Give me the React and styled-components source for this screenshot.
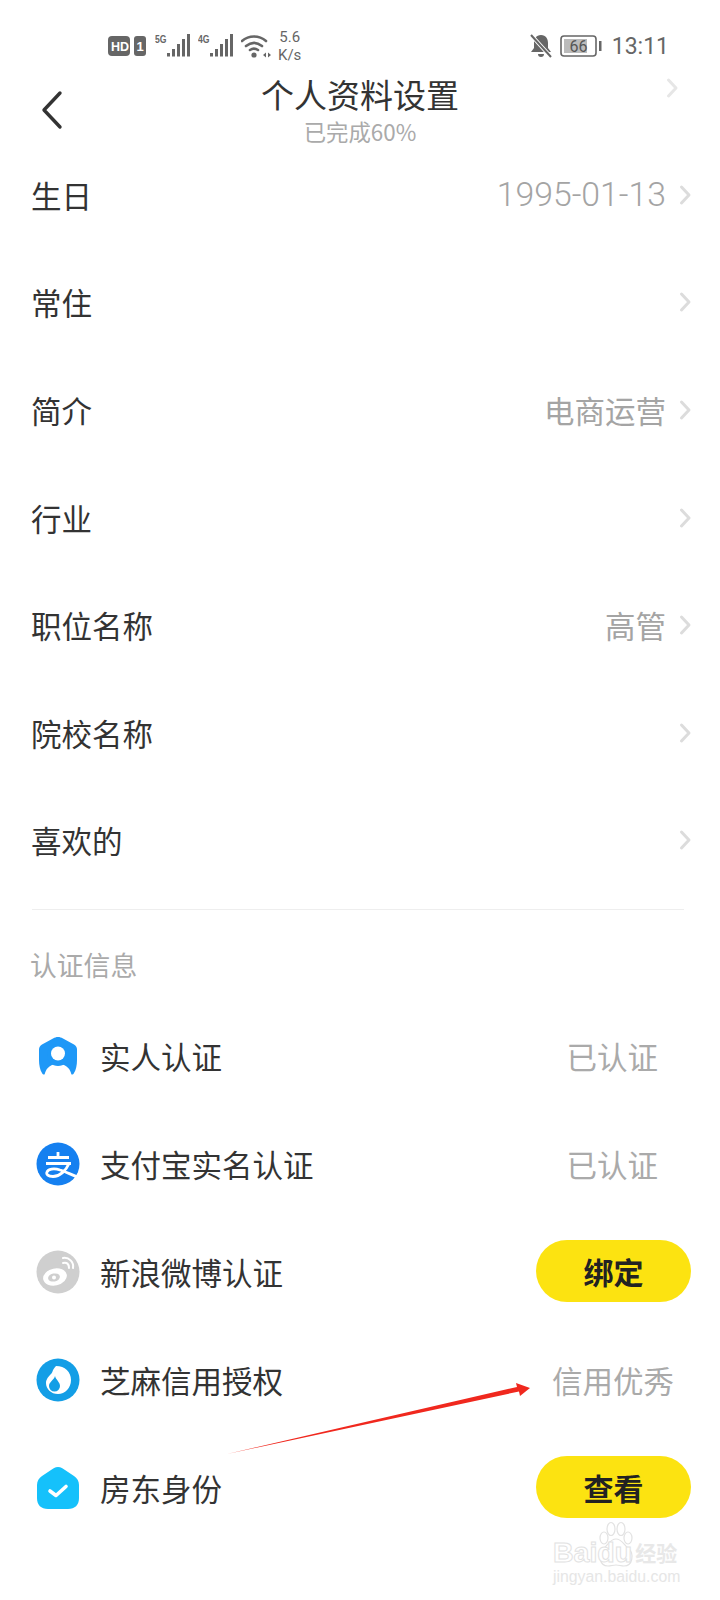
import React from 'react'
import styled, { createGlobalStyle } from 'styled-components'

const GlobalStyle = createGlobalStyle`
    html, body {
        margin: 0;
        background: #fff;
    }
    body {
        font-family: "Noto Sans CJK SC", "Noto Sans", sans-serif;
        color: #333;
    }
`
const Page = styled.div`
    position: relative;
    width: 720px;
    height: 1600px;
    overflow: hidden;
    background: #fff;
`
const StatusBar = styled.div`
    display: flex;
    align-items: center;
    justify-content: space-between;
    height: 48px;
    padding: 22px 51px 0 108px;
    color: #666;
`
const StatusGroup = styled.div`
    display: flex;
    align-items: center;
    gap: 7px;
`
const Speed = styled.div`
    font-family: Roboto, sans-serif;
    font-size: 15px;
    line-height: 18px;
    text-align: center;
    color: #666;
`
const Clock = styled.div`
    font-family: Roboto, sans-serif;
    font-size: 23px;
    color: #666;
    margin-left: 3px;
`
const Header = styled.div`
    position: relative;
    display: flex;
    flex-direction: column;
    align-items: center;
    height: 74px;
    margin: 1px 0 -4px;
`
const BackButton = styled.div`
    position: absolute;
    left: 40px;
    top: 19px;
`
const GhostChevron = styled.div`
    position: absolute;
    right: 41px;
    top: 5px;
`
const Title = styled.div`
    font-size: 33px;
    line-height: 46px;
    color: #333;
`
const Subtitle = styled.div`
    font-size: 22.4px;
    line-height: 28px;
    color: #aaa;
`
const List = styled.div`
    display: flex;
    flex-direction: column;
    padding: 0 32px 0 31px;
`
const Row = styled.div`
    display: flex;
    align-items: center;
    justify-content: space-between;
    height: 107.6px;
`
const Label = styled.div`
    font-size: 30.5px;
    color: #333;
`
const RowRight = styled.div`
    display: flex;
    align-items: center;
    gap: 12px;
    margin-right: -4px;
`
const Value = styled.div`
    font-size: ${p => p.$num ? 33.8 : 30.5}px;
    font-family: ${p => p.$num ? 'Roboto, sans-serif' : 'inherit'};
    font-weight: ${p => p.$num ? 300 : 400};
    color: #a4a4a4;
`
const Divider = styled.div`
    height: 1px;
    margin: 15px 36px 0 32px;
    background: #eee;
`
const SectionTitle = styled.div`
    padding: 37px 30px 0;
    font-size: 26.8px;
    line-height: 36px;
    color: #aaa;
`
const AuthList = styled.div`
    display: flex;
    flex-direction: column;
    padding: 19px 0 0 36px;
`
const AuthRow = styled.div`
    display: flex;
    align-items: center;
    height: 108px;
`
const AuthIcon = styled.div`
    display: flex;
    align-items: center;
    justify-content: center;
    width: 44px;
    height: 44px;
    margin-right: 20px;
`
const AuthLabel = styled.div`
    flex: 1;
    font-size: 30.5px;
    color: #333;
`
const AuthStatus = styled.div`
    font-size: 30.5px;
    color: #aaa;
    margin-right: ${p => p.$right}px;
`
const BindButton = styled.div`
    display: flex;
    align-items: center;
    justify-content: center;
    width: 155px;
    height: 62px;
    margin: -3px 29px 0 0;
    border-radius: 31px;
    background: #fce311;
    font-size: 30px;
    font-weight: 700;
    color: #222;
`
const ArrowLayer = styled.svg`
    position: absolute;
    left: 0;
    top: 0;
    pointer-events: none;
`
const Watermark = styled.div`
    position: absolute;
    left: 553px;
    top: 1536px;
    width: 132px;
`
const MarkLine = styled.div`
    position: relative;
    display: flex;
    align-items: center;
    font-family: "Liberation Sans", sans-serif;
    font-size: 28.5px;
    font-weight: 700;
    line-height: 32px;
    color: #fff;
    -webkit-text-stroke: 1px #e2e2e2;
`
const MarkCn = styled.span`
    font-family: "Noto Sans CJK SC", sans-serif;
    font-size: 21px;
    margin-left: 3px;
    color: #e8e8e8;
    -webkit-text-stroke: 0;
`
const MarkUrl = styled.div`
    font-family: "Liberation Sans", sans-serif;
    font-size: 15.8px;
    line-height: 18px;
    color: #e6e6e6;
    white-space: nowrap;
`
const Paw = styled.svg`
    position: absolute;
    left: 43px;
    top: -15px;
`

const Chevron = ({ color = '#dcdcdc' }) => (
    <svg width="14" height="24" viewBox="0 0 14 24" fill="none">
        <path d="M3.500 4l7.500 8-7.500 8" stroke={color} strokeWidth="3" strokeLinecap="round" strokeLinejoin="round" />
    </svg>
)

const Signal = ({ tag }) => (
    <svg width="36" height="26" viewBox="0 0 36 26">
        <text x="0" y="9.500" transform="scale(.75 1)" fontFamily="Liberation Sans" fontWeight="700" fontSize="11.5" fill="#666">{tag}</text>
        <rect x="12" y="20" width="3" height="3.500" fill="#666" />
        <rect x="17" y="16" width="3" height="7.500" fill="#666" />
        <rect x="22" y="11" width="3" height="12.500" fill="#666" />
        <rect x="27" y="6" width="3" height="17.500" fill="#666" />
        <rect x="32" y="1" width="3" height="22.500" fill="#666" />
    </svg>
)

const fields = [
    ['生日', '1995-01-13', true],
    ['常住'],
    ['简介', '电商运营'],
    ['行业'],
    ['职位名称', '高管'],
    ['院校名称'],
    ['喜欢的'],
]

const icons = {
    person: (
        <svg width="44" height="44" viewBox="0 0 44 44">
            <path d="M22 3c2 0 3 .5 5 1.500l11 6c2 1 3 3 3 5V26c0 5-1 10-3 13-1 2-3 2-4 0-2-4-4-7-12-7s-10 3-12 7c-1 2-3 2-4 0-2-3-3-8-3-13V15.500c0-2 1-4 3-5l11-6c2-1 3-1.500 5-1.500z" fill="#1e98f7" />
            <path d="M8.500 41c1-5 4-11 13.500-11S34.500 36 35.500 41z" fill="#fff" />
            <circle cx="22" cy="21" r="11" fill="#1e98f7" />
            <circle cx="22" cy="19.500" r="7" fill="#fff" />
        </svg>
    ),
    alipay: (
        <svg width="44" height="44" viewBox="0 0 44 44">
            <circle cx="22" cy="22" r="21.500" fill="#1580f0" />
            <path d="M22 10v7M12 15.500h21M10 21.500h25M33 21.500c-3 7-9 13-16 13-5 0-7-2-6-4.500 1-3 7-4 13-2 5 1.500 12 5 20 8" stroke="#fff" strokeWidth="2.800" fill="none" />
        </svg>
    ),
    weibo: (
        <svg width="44" height="44" viewBox="0 0 44 44">
            <circle cx="22" cy="22" r="21.500" fill="#cfcfcf" />
            <ellipse cx="19" cy="27" rx="12" ry="8.500" fill="#fff" transform="rotate(-12 19 27)" />
            <ellipse cx="18" cy="27.500" rx="6" ry="4" fill="#cfcfcf" transform="rotate(-12 18 27.500)" />
            <circle cx="18" cy="27.500" r="2" fill="#fff" />
            <path d="M27 13c4-1 6 1 6 5M27 8c6-1 11 4 10 10" stroke="#fff" strokeWidth="2" fill="none" strokeLinecap="round" />
        </svg>
    ),
    sesame: (
        <svg width="44" height="44" viewBox="0 0 44 44">
            <circle cx="22" cy="22" r="21.500" fill="#139ee6" />
            <path d="M20 8c9 0 15 6 15 14 0 8-6 14-13 14-7 0-12-5-12-11 0-4 3-7 5-9 2-2 1-4 5-8z" fill="#fff" />
            <path d="M19 18c1 4 5 6 5 10a5.500 5.500 0 0 1-11 0c0-4 5-6 6-10z" fill="#139ee6" />
        </svg>
    ),
    landlord: (
        <svg width="44" height="44" viewBox="0 0 44 44">
            <path d="M22 1c3 0 5 1.500 7 3l9 6c3 2 5 5 5 9v13c0 7-4 11-11 11H12C5 43 1 39 1 32V19c0-4 2-7 5-9l9-6c2-1.500 4-3 7-3z" fill="#15c1fb" />
            <path d="M14 25l6 4.500 10-9" stroke="#fff" strokeWidth="3.600" fill="none" strokeLinecap="round" strokeLinejoin="round" />
        </svg>
    ),
}

const authRows = [
    { icon: 'person', label: '实人认证', status: '已认证', right: 62 },
    { icon: 'alipay', label: '支付宝实名认证', status: '已认证', right: 62 },
    { icon: 'weibo', label: '新浪微博认证', button: '绑定' },
    { icon: 'sesame', label: '芝麻信用授权', status: '信用优秀', right: 46 },
    { icon: 'landlord', label: '房东身份', button: '查看' },
]

export default function App() {
    return (
        <Page>
            <GlobalStyle />
            <StatusBar>
                <StatusGroup>
                    <svg width="40" height="20" viewBox="0 0 40 20">
                        <rect x="0" y="0" width="22" height="20" rx="4" fill="#666" />
                        <text x="3" y="15" fontFamily="Liberation Sans" fontWeight="700" fontSize="12.5" fill="#fff">HD</text>
                        <path d="M26 3a3 3 0 0 1 3-3h6a3 3 0 0 1 3 3v14a3 3 0 0 1-3 3h-6a3 3 0 0 1-3-3z" fill="#666" />
                        <text x="28.500" y="15" fontFamily="Liberation Sans" fontWeight="700" fontSize="13" fill="#fff">1</text>
                    </svg>
                    <Signal tag="5G" />
                    <Signal tag="4G" />
                    <svg width="30" height="24" viewBox="0 0 30 24" fill="none">
                        <path d="M1 7c7-6 17-6 24 0M5 12c5-4 11-4 16 0M9 16c3-2 5-2 8 0" stroke="#666" strokeWidth="2.600" strokeLinecap="round" />
                        <circle cx="13" cy="21" r="2.600" fill="#666" />
                        <path d="M22 21l3-2.500v5zM30 21l-3-2.500v5z" fill="#666" />
                    </svg>
                    <Speed>5.6<br />K/s</Speed>
                </StatusGroup>
                <StatusGroup>
                    <svg width="24" height="24" viewBox="0 0 24 24">
                        <path d="M12 1c5 0 7 4 7 8v5l3 4H2l3-4V9c0-4 2-8 7-8zM9 20h6a3 3 0 0 1-6 0z" fill="#666" />
                        <path d="M2 1l20 22" stroke="#fff" strokeWidth="4" />
                        <path d="M2 1l20 22" stroke="#666" strokeWidth="2" />
                    </svg>
                    <svg width="42" height="22" viewBox="0 0 42 22">
                        <rect x="1" y="1" width="35" height="20" rx="3" fill="none" stroke="#666" strokeWidth="1.600" />
                        <rect x="4" y="4" width="23" height="14" fill="#bbb" />
                        <text x="18.500" y="17" textAnchor="middle" fontFamily="Roboto" fontSize="16" fill="#555">66</text>
                        <rect x="39" y="6" width="2.500" height="10" fill="#666" />
                    </svg>
                    <Clock>13:11</Clock>
                </StatusGroup>
            </StatusBar>
            <Header>
                <BackButton>
                    <svg width="24" height="40" viewBox="0 0 24 40" fill="none">
                        <path d="M20 3L4 20l16 17" stroke="#333" strokeWidth="3.400" strokeLinecap="round" strokeLinejoin="round" />
                    </svg>
                </BackButton>
                <GhostChevron><Chevron color="#e6e6e6" /></GhostChevron>
                <Title>个人资料设置</Title>
                <Subtitle>已完成60%</Subtitle>
            </Header>
            <List>
                {fields.map(([label, value, num]) => (
                    <Row key={label}>
                        <Label>{label}</Label>
                        <RowRight>
                            {value && <Value $num={num}>{value}</Value>}
                            <Chevron />
                        </RowRight>
                    </Row>
                ))}
            </List>
            <Divider />
            <SectionTitle>认证信息</SectionTitle>
            <AuthList>
                {authRows.map(row => (
                    <AuthRow key={row.label}>
                        <AuthIcon>{icons[row.icon]}</AuthIcon>
                        <AuthLabel>{row.label}</AuthLabel>
                        {row.button
                            ? <BindButton>{row.button}</BindButton>
                            : <AuthStatus $right={row.right}>{row.status}</AuthStatus>}
                    </AuthRow>
                ))}
            </AuthList>
            <ArrowLayer width="720" height="1600" viewBox="0 0 720 1600">
                <path d="M227 1454L517 1387l-1-4 14 5-10 8-1-4.500z" fill="#f0281e" />
            </ArrowLayer>
            <Watermark>
                <Paw width="40" height="50" viewBox="0 0 40 50" fill="none" stroke="#e2e2e2" strokeWidth="1.200">
                    <ellipse cx="8" cy="17" rx="4" ry="6" />
                    <ellipse cx="15" cy="8" rx="4" ry="6.500" />
                    <ellipse cx="25" cy="8" rx="4" ry="6.500" />
                    <ellipse cx="32" cy="17" rx="4" ry="6" />
                    <path d="M20 18c6 0 8 6 13 10 5 5 4 17-5 17-3 0-5-1-8-1s-5 1-8 1C3 45 2 33 7 28c5-4 7-10 13-10z" />
                </Paw>
                <MarkLine>Baidu<MarkCn>经验</MarkCn></MarkLine>
                <MarkUrl>jingyan.baidu.com</MarkUrl>
            </Watermark>
        </Page>
    )
}
